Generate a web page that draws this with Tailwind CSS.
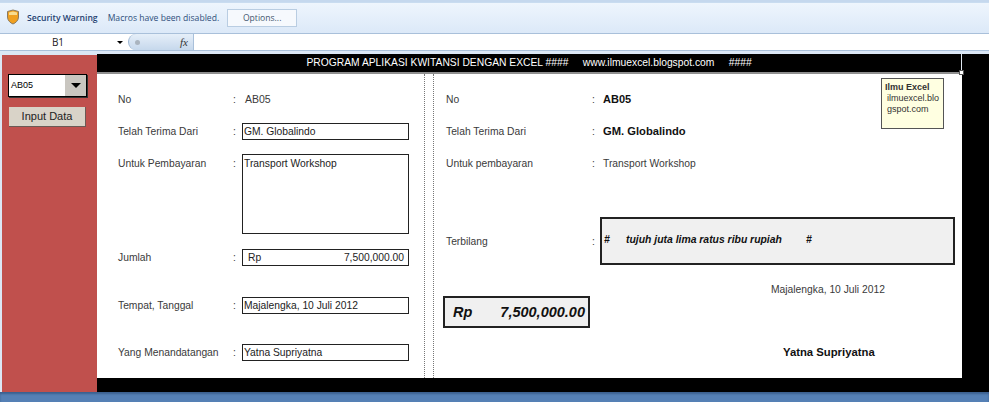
<!DOCTYPE html>
<html lang="en">
<head>
  <meta charset="UTF-8" />
  <title>Kwitansi</title>
  <script src="https://cdn.jsdelivr.net/npm/@tailwindcss/browser@4"></script>
</head>
<body class="w-[989px] h-[402px] overflow-hidden bg-[#c5d8ee] font-['Liberation_Sans',sans-serif] text-[10.3px] text-[#3a3a3a]">
  <div class="h-[402px] flex flex-col">

    <!-- security bar -->
    <div class="h-[31px] mt-[2px] bg-gradient-to-b from-[#eef5fd] to-[#dce9f8] flex items-center pl-[6px] border-t border-[#c9dcf0] shrink-0">
      <svg width="14" height="16" viewBox="0 0 14 16" class="mr-[7px] mb-[2px]">
        <path d="M7 1 L12.5 2.5 V8 C12.5 11.5 9.5 14 7 15 C4.500 14 1.500 11.500 1.500 8 V2.500 Z" fill="#f0a020" stroke="#8a7a60" stroke-width="1"/>
        <path d="M7 2.500 L11 3.500 V6 H3 V3.500 Z" fill="#f8dc90"/>
      </svg>
      <span class="font-['Open_Sans',sans-serif] font-semibold text-[8.6px] text-[#1f3f70]">Security Warning</span>
      <span class="font-['Open_Sans',sans-serif] text-[8.6px] text-[#2f4f7a] ml-[10px]">Macros have been disabled.</span>
      <span class="font-['Open_Sans',sans-serif] ml-[8px] w-[70px] h-[18px] flex items-center justify-center bg-[#f6f9fd] border border-[#b9cde2] text-[8.6px] text-[#44586f]">Options...</span>
    </div>

    <!-- formula bar -->
    <div class="h-[18px] bg-white flex items-center border-y border-[#a9c0da] shrink-0">
      <div class="w-[115px] text-center font-['Open_Sans',sans-serif] text-[10px] text-[#222] pl-px">B1</div>
      <div class="w-0 h-0 ml-[2px] border-x-[3px] border-x-transparent border-t-[3px] border-t-black"></div>
      <div class="ml-[5px] w-[65px] h-[16px] rounded-l-full bg-gradient-to-b from-[#e6eff9] to-[#c6d8ec] border-l border-[#9db6d2] flex items-center justify-between pl-[6px] pr-[5px]">
        <span class="w-[5px] h-[5px] rounded-full bg-[#aab4bf]"></span>
        <span class="font-['Liberation_Serif',serif] italic text-[11px] text-[#333]">fx</span>
      </div>
      <div class="w-px h-[16px] bg-[#a9c0da]"></div>
    </div>

    <!-- sheet -->
    <div class="flex-1 flex pl-[2px] pt-[3px] bg-[#dbe7f5]">
      <div class="w-[95px] h-[337px] mt-px bg-[#c0504d] pt-[19px] pl-[6px] shrink-0">
        <div class="w-[79px] h-[23px] bg-white border border-black flex items-center shadow-[1px_1px_0_#333]">
          <span class="flex-1 pl-[2px] text-[9px] text-black">AB05</span>
          <span class="w-[21px] h-full bg-[#c9c6c0] flex items-center justify-center">
            <span class="w-0 h-0 border-x-[5px] border-x-transparent border-t-[5px] border-t-black"></span>
          </span>
        </div>
        <div class="w-[77px] h-[20px] mt-[10px] ml-[1px] bg-[#d9d3c8] border-b border-r border-[#6b5a55] flex items-center justify-center text-[11px] text-[#222]">Input Data</div>
      </div>

      <div class="w-[892px] bg-black relative">
        <div class="h-[18px] mr-[27px] bg-black border-r border-[#dfe7f0] text-white text-[10.3px] flex items-center justify-center whitespace-pre">PROGRAM APLIKASI KWITANSI DENGAN EXCEL ####     www.ilmuexcel.blogspot.com     ####</div>
        <div class="h-[306px] mr-[27px] border-t-2 border-[#8f8f8f] flex bg-white">

          <!-- input form -->
          <div class="w-[327px] pl-[21px] pr-[15px] pt-[16px]">
            <div class="flex items-center h-[20px]">
              <span class="w-[115px]">No</span><span class="w-[12px]">:</span><span class="text-[10.5px]">AB05</span>
            </div>
            <div class="flex items-center h-[17px] mt-[13px]">
              <span class="w-[115px]">Telah Terima Dari</span><span class="w-[9px]">:</span><span class="w-[167px] h-[17px] border border-[#222] pl-px leading-[15px] text-[#222]">GM. Globalindo</span>
            </div>
            <div class="flex items-start h-[80px] mt-[14px]">
              <span class="w-[115px] mt-[2px]">Untuk Pembayaran</span><span class="w-[9px] mt-[2px]">:</span><span class="w-[167px] h-[80px] border border-[#222] pl-px pt-px text-[#222]">Transport Workshop</span>
            </div>
            <div class="flex items-center h-[17px] mt-[15px]">
              <span class="w-[115px]">Jumlah</span><span class="w-[9px]">:</span><span class="w-[167px] h-[17px] border border-[#222] pl-[5px] pr-[4px] flex justify-between items-center text-[#222]"><span>Rp</span><span>7,500,000.00</span></span>
            </div>
            <div class="flex items-center h-[17px] mt-[31px]">
              <span class="w-[115px]">Tempat, Tanggal</span><span class="w-[9px]">:</span><span class="w-[167px] h-[17px] border border-[#222] pl-px leading-[15px] text-[#222]">Majalengka, 10 Juli 2012</span>
            </div>
            <div class="flex items-center h-[17px] mt-[30px]">
              <span class="w-[115px]">Yang Menandatangan</span><span class="w-[9px]">:</span><span class="w-[167px] h-[17px] border border-[#222] pl-px leading-[15px] text-[#222]">Yatna Supriyatna</span>
            </div>
          </div>

          <!-- dotted divider -->
          <div class="w-[10px] border-x border-dotted border-[#777] shrink-0"></div>

          <!-- receipt -->
          <div class="flex-1 pl-[12px] pt-[16px]">
            <div class="flex items-center h-[20px]">
              <span class="w-[146px]">No</span><span class="w-[11px]">:</span><span class="font-bold text-[11px] text-[#111] pb-px">AB05</span>
            </div>
            <div class="flex items-center h-[17px] mt-[13px]">
              <span class="w-[146px]">Telah Terima Dari</span><span class="w-[11px]">:</span><span class="font-bold text-[11.2px] text-[#111]">GM. Globalindo</span>
            </div>
            <div class="flex items-center h-[17px] mt-[15px]">
              <span class="w-[146px]">Untuk pembayaran</span><span class="w-[11px]">:</span><span>Transport Workshop</span>
            </div>
            <div class="flex items-center mt-[45px]">
              <span class="w-[146px] pt-[2px]">Terbilang</span><span class="w-[8px] pt-[2px]">:</span>
              <span class="w-[355px] h-[48px] border-2 border-[#222] bg-[#f0f0f0] flex items-center pl-[2px] pb-[2px] font-bold italic text-[10.4px] text-[#111] whitespace-pre"><span class="w-[22px]">#</span><span>tujuh juta lima ratus ribu rupiah</span><span class="ml-[24px]">#</span></span>
            </div>
            <div class="flex items-start mt-[17px] ml-[-3px]">
              <div class="w-[147px] h-[32px] mt-[14px] border-2 border-[#222] bg-[#f0f0f0] flex justify-between items-center pl-[8px] pr-[3px] pt-px font-bold italic text-[14.5px] text-[#111]"><span>Rp</span><span>7,500,000.00</span></div>
              <div class="ml-[181px]">Majalengka, 10 Juli 2012</div>
            </div>
            <div class="ml-[337px] mt-[16px] font-bold text-[11.3px] text-[#111]">Yatna Supriyatna</div>
          </div>
        </div>

        <!-- cell comment -->
        <div class="absolute left-[784px] top-[24px] w-[63px] h-[51px] bg-[#ffffe1] border border-[#555] p-[3px] text-[9px] leading-[11px] text-[#333]">
          <div class="font-bold">Ilmu Excel</div>
          <div class="pl-[2px] break-all">ilmuexcel.blogspot.com</div>
        </div>
        <div class="absolute left-[862px] top-[16px] w-[5px] h-[5px] bg-white border border-[#555]"></div>
      </div>
    </div>

    <!-- below the sheet -->
    <div class="h-[10px] bg-[#5580b5] shadow-[inset_0_2px_2px_#3c5f8f] shrink-0"></div>
  </div>
</body>
</html>
